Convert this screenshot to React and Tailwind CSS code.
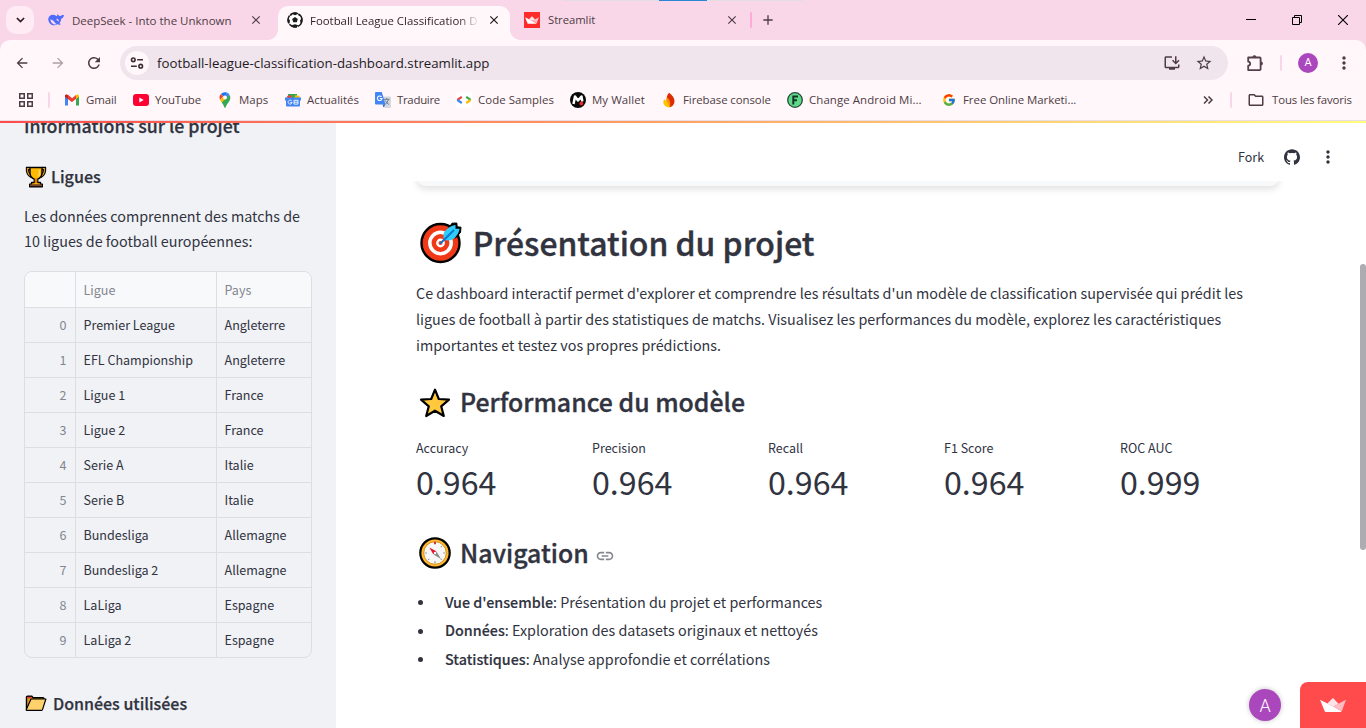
import React from "react";
import { MdArrowBack, MdArrowForward, MdRefresh, MdStarOutline, MdInstallDesktop, MdMoreVert, MdLink, MdOutlineFolder, MdClose, MdAdd } from "react-icons/md";
import { FcGoogle } from "react-icons/fc";
import { SiGithub } from "react-icons/si";

const leagues = [
  ["Premier League", "Angleterre"],
  ["EFL Championship", "Angleterre"],
  ["Ligue 1", "France"],
  ["Ligue 2", "France"],
  ["Serie A", "Italie"],
  ["Serie B", "Italie"],
  ["Bundesliga", "Allemagne"],
  ["Bundesliga 2", "Allemagne"],
  ["LaLiga", "Espagne"],
  ["LaLiga 2", "Espagne"],
];

const metrics = [
  ["Accuracy", "0.964"],
  ["Precision", "0.964"],
  ["Recall", "0.964"],
  ["F1 Score", "0.964"],
  ["ROC AUC", "0.999"],
];

const sections = [
  ["Vue d'ensemble", ": Présentation du projet et performances"],
  ["Données", ": Exploration des datasets originaux et nettoyés"],
  ["Statistiques", ": Analyse approfondie et corrélations"],
];

/* ---------- icons ---------- */

function Whale() {
  return (
    <svg viewBox="0 0 16 16" className="size-4">
      <path d="M.2 7.200C.4 4.300 2.600 2.500 5.400 2.700 6.600 2.800 7.700 3.400 8.500 4.300 9.100 3.900 9.400 3.200 9.200 2.300c1.300.5 1.700 1.500 2.700 1.700 1.100.2 1.700-.7 2.300-1.300.4.2 1 .3 1.700.2-.1 1.900-1.100 3.300-2.600 3.700-.2 2-.9 3.500-1.900 4.600.5.4 1.200.6 1.700.9-.9.800-2.600.7-3.600.2C5.600 14.500 1 13 .2 7.200Z" fill="#4d6bfe" />
      <path d="M2.400 7.400c2 .2 3.700 1.500 4.900 3.500.5.800 1.200 1.100 1.800 1.100-2.300 1.100-6.200.1-6.700-4.600ZM8.300 6.900c1.500-.3 2.600.8 2.600 2.300-.9.100-1.900-.7-2.600-2.300Z" fill="#fad7e8" />
    </svg>
  );
}

function Ball() {
  return (
    <svg viewBox="0 0 16 16" className="size-4">
      <circle cx="8" cy="8" r="7" fill="#fff" stroke="#1c1c1c" strokeWidth="1.500" strokeDasharray="8 1.200" />
      <path d="M8 5 10.800 7 9.800 10.300H6.200L5.200 7ZM4 1.600 8 3.300 12 1.600 8 .3ZM.7 6 3 8.300 2.400 11.700.5 9ZM15.300 6 13 8.300 13.600 11.700 15.500 9ZM4.700 13.300 8 12.200 11.300 13.300 9.800 15.500H6.200ZM1.800 4.300l2.800-.8.3-1.900ZM14.200 4.300l-2.800-.8-.3-1.900Z" fill="#1c1c1c" />
    </svg>
  );
}

function Crown({ className }) {
  return (
    <svg viewBox="0 0 26 14" className={className}>
      <path d="M0 1.700 13 8.300 21.500 13.300Q21.300 14 20.500 14H6Q5 14 4.600 13Z" fill="#fff" />
      <path d="M7.300 5.400 12.400.4q.6-.6 1.200 0L18.700 6 13.300 8.400Z" fill="#ffe3e8" />
      <path d="M13.300 8.400 26 1.700 21.800 13.200Z" fill="#ffbcc3" />
    </svg>
  );
}

function GridIcon() {
  return (
    <svg viewBox="0 0 14 14" className="size-[14px]" fill="none" stroke="#4e3c45" strokeWidth="1.500">
      <rect x=".75" y=".75" width="4.500" height="4.500" />
      <rect x="8.750" y=".75" width="4.500" height="4.500" />
      <rect x=".75" y="8.750" width="4.500" height="4.500" />
      <rect x="8.750" y="8.750" width="4.500" height="4.500" />
    </svg>
  );
}

function GmailIcon() {
  return (
    <svg viewBox="0 0 16 16" className="size-4">
      <path d="M1 4v9.500h3V6.300Z" fill="#4285f4" />
      <path d="M15 4v9.500h-3V6.300Z" fill="#34a853" />
      <path d="M1 4.200C1 2.500 2.800 2 4 3l4 3.200V10L1 4.800Z" fill="#ea4335" />
      <path d="M12 3c1.200-1 3-.5 3 1.200v.6l-3 2.300Z" fill="#fbbc04" />
      <path d="M4 3.100 8 6.200l4-3.100v3.900L8 10 4 7Z" fill="#ea4335" />
      <path d="M1 4.200C1 3.300 1.600 2.700 2.300 2.600L4 3.600V7L1 4.800Z" fill="#c5221f" />
    </svg>
  );
}

function YoutubeIcon() {
  return (
    <svg viewBox="0 0 16 16" className="size-4">
      <rect y="2" width="16" height="12" rx="3" fill="#ff0033" />
      <path d="M6.300 5.500 10.700 8 6.300 10.500Z" fill="#fff" />
    </svg>
  );
}

function MapsIcon() {
  return (
    <svg viewBox="0 0 16 16" className="size-4">
      <path d="M8 .2A5.300 5.300 0 0 0 3.900 2.100L8 5.600 10 .6A5.300 5.300 0 0 0 8 .2Z" fill="#1a73e8" />
      <path d="M3.900 2.100a5.400 5.400 0 0 0-.8 5.900L6.300 4.200Z" fill="#ea4335" />
      <path d="M10 .6 6.500 4.500 9.600 6.700 12.600 3A5.200 5.200 0 0 0 10 .6Z" fill="#4285f4" />
      <path d="M3.100 8c.4 1 1 1.700 1.600 2.500l5-3.800L6.400 4.200Z" fill="#fbbc04" />
      <path d="M12.600 3 4.700 10.500C6 12 6.700 13.500 7.300 15.300c.2.700 1.200.7 1.400 0 .8-2.800 2.200-4 3.500-6C13.500 7.400 13.700 5 12.600 3Z" fill="#34a853" />
      <circle cx="8" cy="5.500" r="1.900" fill="#fff" />
    </svg>
  );
}

function NewsIcon() {
  return (
    <svg viewBox="0 0 16 16" className="size-4">
      <path d="M3 2h9v5H3Z" fill="#34a853" />
      <path d="M10.500 3 14.500 4 13.500 7H9Z" fill="#fbbc04" />
      <path d="M2 4 6 3 8 7H2.500Z" fill="#ea4335" />
      <rect x="1" y="5.500" width="14" height="9" rx="1" fill="#4285f4" />
      <path d="M6.800 9A2 2 0 1 0 7.100 10.500H5.300M9 8.300h4v3.800H9ZM9 10.200h4" fill="none" stroke="#e8f0fe" strokeWidth="1" />
      <path d="M0 5.500h2v3H0ZM14 5.500h2v3h-2Z" fill="#4285f4" />
    </svg>
  );
}

function TranslateIcon() {
  return (
    <svg viewBox="0 0 16 16" className="size-4">
      <path d="M6 4.500h9q1 0 1 1V15q0 1-1 1H9.500Z" fill="#d5d8dc" />
      <path d="M9 7.300h5.500M11.700 6v1.300M13.500 7.400Q12.800 10.500 10 12.500M10.300 8.500Q11.700 11.500 14 12.500" fill="none" stroke="#61798a" strokeWidth=".9" />
      <path d="M1 0h5.800L10.500 12.500H1Q0 12.500 0 11.500V1Q0 0 1 0Z" fill="#4285f4" />
      <path d="M6.500 4.800A2.300 2.300 0 1 0 7 6.500H4.900" fill="none" stroke="#fff" strokeWidth="1.100" />
      <path d="M7.500 12.500h3L8.500 15.500Z" fill="#3367d6" />
    </svg>
  );
}

function CodeIcon() {
  return (
    <svg viewBox="0 0 16 16" className="size-4">
      <rect width="16" height="16" rx="2" fill="#fff" />
      <g fill="none" strokeWidth="2.200">
        <path d="M5.800 4.900 3.600 6.400 1.300 8" stroke="#ea4335" />
        <path d="M1.300 7.800 3.600 9.500 5.800 11" stroke="#4285f4" />
        <path d="M10.200 4.900 12.400 6.400 14.700 8" stroke="#34a853" />
        <path d="M14.700 7.800 12.400 9.500 10.200 11" stroke="#fbbc04" />
      </g>
    </svg>
  );
}

function WalletIcon() {
  return (
    <svg viewBox="0 0 16 16" className="size-4">
      <circle cx="8" cy="8" r="8" fill="#080808" />
      <path d="M3.500 12 5 4.500 8 8.500 11.500 4.500 12.300 9.500" fill="none" stroke="#fff" strokeWidth="2.500" strokeLinejoin="round" />
      <circle cx="11.300" cy="11.500" r="1.900" fill="#f02525" />
    </svg>
  );
}

function FirebaseIcon() {
  return (
    <svg viewBox="0 0 16 16" className="size-4">
      <path d="M8 .8c3 2 5.500 5 5.500 8.500A5.700 5.700 0 0 1 8 15.200C5.800 13.300 4 5 8 .8Z" fill="#dd2c00" />
      <path d="M5.800 5.300C8.500 7 10.300 11 8.600 15.300L5.300 14.300Z" fill="#ff9100" />
      <path d="M3.200 7.200C6 9 8 12 8.600 15.300 5 15.600 1.600 12.500 2.500 9Z" fill="#ffc400" />
    </svg>
  );
}

function GreenF() {
  return (
    <svg viewBox="0 0 16 16" className="size-4">
      <circle cx="8" cy="8" r="7.300" fill="#5ddb8c" stroke="#29483a" strokeWidth="1.300" />
      <path d="M6.300 12.500V4.500H11M6.300 8.300H10" fill="none" stroke="#173526" strokeWidth="2" />
    </svg>
  );
}

function Puzzle() {
  return (
    <svg viewBox="0 0 20 20" className="size-5" fill="none" stroke="#54404a" strokeWidth="1.800" strokeLinejoin="round">
      <path d="M3.200 4.500h11.600q.8 0 .8.800v11q0 .8-.8.800H3.200v-4.400q2-.3 2-2t-2-2Z" />
      <path d="M8 4.200a1.400 1.400 0 0 1 2.800 0ZM15.900 9.200a1.400 1.400 0 0 1 0 2.800Z" fill="#54404a" strokeWidth="1.200" />
    </svg>
  );
}

function SiteInfo() {
  return (
    <svg viewBox="0 0 14 14" className="size-[14px]" fill="none" stroke="#3d2c35" strokeWidth="1.600">
      <circle cx="3.300" cy="3.800" r="1.800" />
      <path d="M7.200 3.800H13M1 10.200h5.800" />
      <circle cx="10.700" cy="10.200" r="1.800" />
    </svg>
  );
}

function Trophy() {
  return (
    <svg viewBox="0 0 22 22" className="h-[22px] w-[22px]">
      <path d="M5 2.500H2.500Q2 8 6.500 10.500M17 2.500h2.500q.5 5.500-4 8" fill="none" stroke="#000" strokeWidth="3.400" />
      <path d="M5 2.500H2.500Q2 8 6.500 10.500M17 2.500h2.500q.5 5.500-4 8" fill="none" stroke="#e59a12" strokeWidth="1.200" />
      <path d="M5 1.500h12v5q0 5-4.300 6.700v3.300h2.800v1.700h1.800v2.600H4.700v-2.600h1.800v-1.700h2.800v-3.300Q5 11.500 5 6.500Z" fill="#ffb900" stroke="#000" strokeWidth="1.400" strokeLinejoin="round" />
      <path d="M9.700 12.500h2.600v4.500H9.700Z" fill="#d67d00" />
      <path d="M5.300 18.200h11.400v2H5.300Z" fill="#7a4526" />
      <path d="M14.300 4v3.500q0 2-1.500 3" fill="none" stroke="#ffd968" strokeWidth="1.300" />
    </svg>
  );
}

function Folder() {
  return (
    <svg viewBox="0 0 22 17" className="h-[17px] w-[22px]">
      <path d="M1.500 14V2.200q0-1 1-1H6.800l1.300 1.600H18q1 0 1 1v2" fill="#e59a12" stroke="#000" strokeWidth="1.400" />
      <path d="M2.200 1.800H6.500v1.500H2.200Z" fill="#e53935" />
      <path d="M6 4H20.900L17.500 14.600Q17.300 15.300 16.500 15.300H1.700q-.7 0-.4-.7Z" fill="#ffd16b" stroke="#000" strokeWidth="1.200" strokeLinejoin="round" />
    </svg>
  );
}

function Target() {
  return (
    <svg viewBox="0 0 42 42" className="size-[42px]">
      <circle cx="20.500" cy="21" r="19" fill="#f03a17" stroke="#000" strokeWidth="2.400" />
      <circle cx="20.500" cy="21" r="10.700" fill="none" stroke="#fff" strokeWidth="3.500" />
      <circle cx="20.500" cy="21" r="3.200" fill="#f03a17" stroke="#fff" strokeWidth="2.400" />
      <path d="M28.500 14 28 7 32 1.200 36.800 1 37.200 4.800 41 5.200 40.500 10.500 35.500 16Z" fill="#000" stroke="#000" strokeWidth="1" />
      <path d="M24 17.500Q22 11.500 26.500 7.500 30.500 3.500 35.500 3V6.700H39.700Q39 11.500 35.200 15.500 30.500 20 24 17.500Z" fill="#30cdfa" />
      <path d="M20.800 21 33.500 8.500" stroke="#0878d1" strokeWidth="2" strokeLinecap="round" />
    </svg>
  );
}

function Star() {
  return (
    <svg viewBox="0 0 32 32" className="size-8">
      <path d="M16 2.700 19.800 12 30 12.700 22.200 19.300 24.800 29 16 23.700 7.200 29 9.800 19.300 2 12.700 12.200 12Z" fill="#ffc83d" stroke="#000" strokeWidth="2.200" strokeLinejoin="round" />
    </svg>
  );
}

function Compass() {
  return (
    <svg viewBox="0 0 32 32" className="size-8">
      <circle cx="16" cy="16" r="14.700" fill="#ffb92e" stroke="#000" strokeWidth="2.200" />
      <circle cx="16" cy="16" r="11.300" fill="#f7f7f7" stroke="#d98f1e" strokeWidth="1" />
      <path d="M16 24v2.500M5.800 16H8M24 16h2.200M9.200 22.800l1-1M21.800 10.200l1-1M22.800 22.800l-1-1" stroke="#9d9d9d" strokeWidth="1.200" />
      <path d="M16 4.700v2.600" stroke="#d13438" strokeWidth="2" />
      <path d="M10.300 10.500 17.300 14.300 14.300 17.300Z" fill="#e1122a" />
      <path d="M22 22 17.500 14.500 14.500 17.500Z" fill="#8b8b8b" />
      <circle cx="16" cy="16" r="1.200" fill="#fff" />
    </svg>
  );
}

/* ---------- browser frame ---------- */

const bookmarks = [
  { label: "Gmail", icon: <GmailIcon />, cls: "w-[69px] tracking-[-0.1px]" },
  { label: "YouTube", icon: <YoutubeIcon />, cls: "w-[84px] tracking-[-0.16px]" },
  { label: "Maps", icon: <MapsIcon />, cls: "w-[68px]" },
  { label: "Actualités", icon: <NewsIcon />, cls: "w-[90px]" },
  { label: "Traduire", icon: <TranslateIcon />, cls: "w-[81px] tracking-[-0.3px]" },
  { label: "Code Samples", icon: <CodeIcon />, cls: "w-[114px] tracking-[0.04px]" },
  { label: "My Wallet", icon: <WalletIcon />, cls: "w-[91px] tracking-[0.08px]" },
  { label: "Firebase console", icon: <FirebaseIcon />, cls: "w-[126px] tracking-[-0.08px]" },
  { label: "Change Android Mi...", icon: <GreenF />, cls: "w-[154px] tracking-[0.08px]" },
  { label: "Free Online Marketi...", icon: <FcGoogle size={14} className="mx-px" />, cls: "w-[200px] tracking-[-0.04px]" },
];

function TabStrip() {
  return (
    <div className="relative flex h-10 items-center bg-[#fad7e8] text-[#4e3c45]">
      <div className="absolute top-0 left-[563px] flex h-px w-[240px] justify-center bg-[#e3dde3]">
        <div className="h-px w-12 bg-[#2b86d4]" />
      </div>
      <div className="ml-1.5 flex size-7 items-center justify-center rounded-[10px] bg-[#ffebf3]">
        <svg viewBox="0 0 10 6" className="h-1.5 w-[9px]" fill="none" stroke="#2b1f25" strokeWidth="1.900"><path d="m1 .8 4 4 4-4" /></svg>
      </div>
      <div className="ml-[14px] flex w-[230px] items-center">
        <Whale />
        <span className="ml-2 w-[176px] pt-px text-[11.5px] whitespace-nowrap">DeepSeek - Into the Unknown</span>
        <MdClose size={14} className="ml-px" />
      </div>
      <div className="relative flex h-[34px] w-[232px] items-center self-end rounded-t-[10px] bg-[#fff7f9] pb-[6px] pl-[9px]">
        <div className="absolute bottom-0 -left-[10px] size-[10px] bg-[radial-gradient(circle_at_0_0,#fad7e8_9.500px,#fff7f9_10px)]" />
        <div className="absolute -right-[10px] bottom-0 size-[10px] bg-[radial-gradient(circle_at_100%_0,#fad7e8_9.500px,#fff7f9_10px)]" />
        <Ball />
        <span className="ml-[7px] w-[168px] overflow-hidden bg-[linear-gradient(90deg,#2b1f25_148px,#2b1f2510_168px)] bg-clip-text pt-px text-[11.4px] whitespace-nowrap text-transparent">Football League Classification D</span>
        <MdClose size={14} className="ml-[9px] text-[#1f1519]" />
      </div>
      <div className="ml-[14px] flex items-center">
        <div className="flex size-4 items-center justify-center bg-[#ff2b2b]"><Crown className="h-2 w-[14px]" /></div>
        <span className="ml-2 w-[176px] pt-px text-[11.3px] tracking-[-0.05px]">Streamlit</span>
        <MdClose size={14} className="ml-px" />
      </div>
      <div className="ml-[11px] h-4 w-0.5 rounded bg-[#ffaad9]" />
      <MdAdd size={16} className="ml-2" />
      <div className="ml-auto flex items-center gap-9 pr-[18px]">
        <svg viewBox="0 0 10 10" className="size-[10px]"><path d="M0 4.500h10" stroke="#000" /></svg>
        <svg viewBox="0 0 10 10" className="size-[10px]" fill="none" stroke="#000"><path d="M.5 2.500h7v7h-7ZM2.500 2.500v-2h7v7h-2" /></svg>
        <svg viewBox="0 0 10 10" className="size-[10px]"><path d="m0 0 10 10M10 0 0 10" stroke="#000" strokeWidth="1.100" /></svg>
      </div>
    </div>
  );
}

function Toolbar() {
  return (
    <div className="bg-[#fad7e8]">
      <div className="flex h-[46px] items-center rounded-t-[10px] bg-[#fff7f9] pl-[14px] text-[#4e3c45]">
        <MdArrowBack size={16} />
        <MdArrowForward size={16} className="ml-5 text-[#ad9fa6]" />
        <MdRefresh size={18} className="ml-[19px]" />
        <div className="ml-[17px] flex h-[34px] w-[1108px] items-center rounded-full bg-[#f0e5ed] pr-[15px] pl-[5px]">
          <div className="flex size-6 items-center justify-center rounded-full bg-[#fff7f9]"><SiteInfo /></div>
          <span className="ml-2 pt-0.5 text-[13.28px] text-[#231a1f]">football-league-classification-dashboard.streamlit.app</span>
          <MdInstallDesktop size={18} className="ml-auto" />
          <MdStarOutline size={18} className="ml-[14px]" />
        </div>
        <div className="ml-[17px]"><Puzzle /></div>
        <div className="ml-[15px] h-4 w-0.5 rounded bg-[#fad7e8]" />
        <div className="ml-4 flex size-5 items-center justify-center rounded-full bg-[#ab47bc] font-['Roboto',sans-serif] text-[11px] text-white">A</div>
        <MdMoreVert size={20} className="ml-4" />
      </div>
    </div>
  );
}

function Bookmarks() {
  return (
    <div className="flex h-[35px] items-center border-b border-[#eadde6] bg-[#fff7f9] pb-[6px] pl-[19px] text-[11.45px] text-[#4e3c45]">
      <GridIcon />
      <div className="ml-[15px] h-4 w-0.5 rounded bg-[#fad7e8]" />
      <div className="ml-[14px] flex">
        {bookmarks.map((b) => (
          <div key={b.label} className={"flex items-center gap-1.5 whitespace-nowrap " + b.cls}>
            {b.icon}
            <span>{b.label}</span>
          </div>
        ))}
      </div>
      <svg viewBox="0 0 10 8" className="ml-auto h-2 w-[10px]" fill="none" stroke="#4e3c45" strokeWidth="1.500"><path d="m1 .5 3.500 3.500L1 7.500M5.500.5 9 4 5.500 7.500" /></svg>
      <div className="ml-[17px] h-4 w-0.5 rounded bg-[#fad7e8]" />
      <MdOutlineFolder size={18} className="ml-[15px]" />
      <span className="ml-[7px] w-[94px] tracking-[-0.14px] whitespace-nowrap">Tous les favoris</span>
    </div>
  );
}

/* ---------- application ---------- */

function LeagueTable() {
  return (
    <div className="mt-[17px] w-[288px] overflow-hidden rounded-[8px] border border-[#dcdee2] text-[12.55px]">
      <div className="flex h-9 border-b border-[#dcdee2] bg-[#f8f9fb] leading-[35px] text-[#83858f]">
        <div className="w-[51px] border-r border-[#dcdee2]" />
        <div className="w-[141px] border-r border-[#dcdee2] pl-[7.500px]">Ligue</div>
        <div className="pl-[7.500px]">Pays</div>
      </div>
      {leagues.map(([name, country], i) => (
        <div key={name} className="flex h-[35px] border-b border-[#dcdee2] leading-[34px] last:h-[34px] last:border-b-0">
          <div className="w-[51px] border-r border-[#dcdee2] pr-[8.500px] text-right text-[#83858f]">{i}</div>
          <div className="w-[141px] border-r border-[#dcdee2] pl-[7.500px]">{name}</div>
          <div className="pl-[7.500px]">{country}</div>
        </div>
      ))}
    </div>
  );
}

function Sidebar() {
  return (
    <aside className="h-full w-[336px] shrink-0 overflow-hidden bg-[#f0f2f6] px-6">
      <h2 className="-mt-2 h-6 text-[17.8px] leading-6 font-medium [-webkit-text-stroke:0.25px]">Informations sur le projet</h2>
      <h3 className="mt-[27px] flex h-6 items-center text-[16.1px] leading-6 font-medium [-webkit-text-stroke:0.25px]">
        <span className="mt-px ml-px"><Trophy /></span>
        <span className="ml-1">Ligues</span>
      </h3>
      <p className="mt-[14.500px] text-[14.33px] leading-[25.500px]">Les données comprennent des matchs de<br />10 ligues de football européennes:</p>
      <LeagueTable />
      <h3 className="mt-[33px] flex h-6 items-center text-[16px] leading-6 font-medium [-webkit-text-stroke:0.25px]">
        <span className="mt-0.5 ml-px"><Folder /></span>
        <span className="ml-1.5">Données utilisées</span>
      </h3>
    </aside>
  );
}

function Main() {
  return (
    <main className="relative flex h-full flex-1 flex-col overflow-hidden bg-white">
      <div className="relative z-10 flex h-[60px] items-center bg-white pt-3 pl-[902px]">
        <span className="w-[26px] text-[12.5px] leading-6">Fork</span>
        <SiGithub size={16} className="ml-5" />
        <MdMoreVert size={20} className="ml-[18px]" />
      </div>
      <div className="-mt-5 ml-20 h-[25px] w-[864px] shrink-0 rounded-[10px] bg-[#f8f9fb] shadow-[0_4px_6px_rgba(0,0,0,0.1)]" />
      <div className="ml-20 w-[864px]">
        <h1 className="mt-8 flex h-12 items-center text-[31.9px] leading-[48px] font-medium [-webkit-text-stroke:0.4px]">
          <span className="mt-px ml-1"><Target /></span>
          <span className="ml-[10.700px]">Présentation du projet</span>
        </h1>
        <p className="mt-[14px] text-[14.33px] leading-[26px] whitespace-nowrap">
          Ce dashboard interactif permet d'explorer et comprendre les résultats d'un modèle de classification supervisée qui prédit les<br />
          ligues de football à partir des statistiques de matchs. Visualisez les performances du modèle, explorez les caractéristiques<br />
          importantes et testez vos propres prédictions.
        </p>
        <h2 className="mt-[23px] flex h-10 items-center text-[24.85px] leading-10 font-medium [-webkit-text-stroke:0.35px]">
          <span className="mt-[3px] ml-[3px]"><Star /></span>
          <span className="ml-[9px]">Performance du modèle</span>
        </h2>
        <div className="mt-[17px] flex">
          {metrics.map(([label, value]) => (
            <div key={label} className="w-44 shrink-0">
              <div className="text-[12.5px] leading-5">{label}</div>
              <div className="mt-[3px] text-[32.2px] leading-10">{value}</div>
            </div>
          ))}
        </div>
        <h2 className="mt-[31px] flex h-10 items-center text-[24.85px] leading-10 font-medium [-webkit-text-stroke:0.35px]">
          <span className="mt-[2px] ml-[3px]"><Compass /></span>
          <span className="ml-[9px]">Navigation</span>
          <MdLink size={20} className="mt-2 ml-[6px] text-[#85878f]" />
        </h2>
        <ul className="mt-4 text-[14.33px] leading-[28.400px]">
          {sections.map(([name, text]) => (
            <li key={name} className="flex items-center whitespace-pre">
              <span className="mt-px mr-[22px] ml-0.5 size-[5px] rounded-full bg-[#31333f]" />
              <span className="font-medium [-webkit-text-stroke:0.15px]">{name}</span>{text}
            </li>
          ))}
        </ul>
      </div>
      <div className="absolute top-[143px] right-0 h-[286px] w-1.5 rounded-full bg-[#adacb1]" />
      <div className="absolute right-[85px] bottom-[7px] flex size-8 items-center justify-center rounded-full bg-[#ab47bc] font-['Roboto',sans-serif] text-[18px] font-light text-white shadow-[0_0_5px_rgba(0,0,0,0.25)]">A</div>
      <div className="absolute right-0 bottom-0 flex h-[46px] w-[66px] items-center justify-center rounded-tl-[8px] bg-[#ff4b4b]">
        <Crown className="h-[14px] w-[26px]" />
      </div>
    </main>
  );
}

export default function App() {
  return (
    <div className="flex h-[728px] w-[1366px] flex-col overflow-hidden font-['Open_Sans',sans-serif]">
      <header className="shrink-0">
        <TabStrip />
        <Toolbar />
        <Bookmarks />
      </header>
      <div className="relative flex h-[607px] font-['Noto_Sans_CJK_SC',sans-serif] text-[#31333f]">
        <Sidebar />
        <Main />
        <div className="absolute inset-x-0 top-0 z-20 h-0.5 bg-[linear-gradient(90deg,#ff4b4b,#fffd80)]" />
      </div>
    </div>
  );
}
